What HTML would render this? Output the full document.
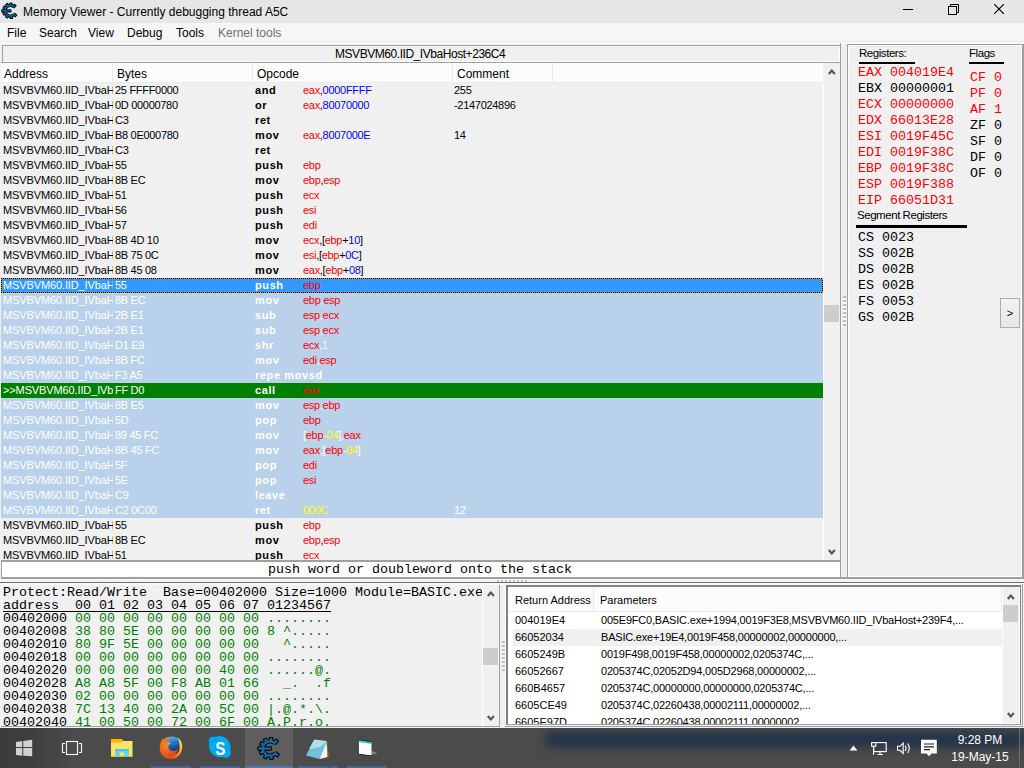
<!DOCTYPE html>
<html><head><meta charset="utf-8">
<style>
*{margin:0;padding:0;box-sizing:border-box}
html,body{width:1024px;height:768px;overflow:hidden}
body{position:relative;background:#f0f0f0;font-family:"Liberation Sans",sans-serif;color:#000}
.a{position:absolute}
i{font-style:normal}
b{font-weight:bold}
#title{left:0;top:0;width:1024px;height:23px;background:#e6e6e6}
#title .t{left:23px;top:4px;font-size:12px;line-height:16px;white-space:nowrap}
#menu{left:0;top:23px;width:1024px;height:18px;background:#f5f6f7}
#menu span{position:absolute;top:2px;font-size:12px;line-height:16px}
#strip{left:0;top:41px;width:1024px;height:1px;background:#ebebeb}
#strip2{left:0;top:42px;width:1024px;height:2px;background:#f8f8f8}
/* disassembler */
#dhead{left:2px;top:45px;width:838px;height:17px;border-top:1px solid #a0a0a0;border-left:1px solid #a0a0a0;background:#f0f0f0;box-shadow:inset 0 -1px 0 #fff,inset -1px 0 0 #fff}
#dhead .t{left:332px;top:0;font-size:12px;letter-spacing:-0.45px;line-height:16px;white-space:nowrap}
#dline{left:1px;top:62px;width:839px;height:1px;background:#a0a0a0}
#dvline{left:840px;top:43px;width:1px;height:535px;background:#a0a0a0}
#lhdr{left:1px;top:63px;width:822px;height:20px;background:#fcfcfc;border-bottom:1px solid #e3ecf7}
#lhdr span{position:absolute;top:3px;font-size:12px;line-height:16px}
#lhdr .sp{top:0;width:1px;height:19px;background:#e3ecf7}
#list{left:1px;top:83px;width:822px;height:477px;overflow:hidden;background:#f0f0f0}
.row{position:absolute;left:0;width:822px;height:15px;font-size:11px;line-height:15px;white-space:nowrap;letter-spacing:-0.3px}
.row b{letter-spacing:0.6px}
.row i{position:absolute;top:0;overflow:hidden}
.ca{left:2px;width:110px;letter-spacing:-0.12px}
.cb{left:114px;width:137px}
.co{left:254px;width:198px}
.cp{left:302px;width:150px}
.cc{left:453px;width:100px}
.r{color:#ff0000}.b{color:#0000ff}.k{color:#000}.w{color:#f4f4f4}
.hl{background:#b9d1ea;color:#fff}
.hl .k{color:#fff}.hl .b{color:#ffff00}
.sel{background:#3399ff;color:#fff}
.sel::before{content:"";position:absolute;left:0;top:0;right:0;bottom:0;background:repeating-linear-gradient(90deg,#000 0 1px,#e08020 1px 2px) top/100% 1px no-repeat,repeating-linear-gradient(90deg,#000 0 1px,#e08020 1px 2px) bottom/100% 1px no-repeat,repeating-linear-gradient(180deg,#000 0 1px,#e08020 1px 2px) left/1px 100% no-repeat,repeating-linear-gradient(180deg,#000 0 1px,#e08020 1px 2px) right/1px 100% no-repeat}
.sel .k{color:#fff}.sel .b{color:#ffff00}
.cur{background:#008000;color:#fff}
.cur .k{color:#fff}.cur .b{color:#ffff00}
#vscroll{left:824px;top:63px;width:16px;height:497px;background:#f0f0f0}
#vthumb{left:824px;top:305px;width:15px;height:17px;background:#cdcdcd}
#dbot{left:1px;top:560px;width:839px;height:1px;background:#a0a0a0}
#status{left:1px;top:561px;width:839px;height:18px;background:#fff;border-left:1px solid #a0a0a0;border-top:1px solid #a0a0a0;border-bottom:2px solid #a0a0a0}
#status .t{left:266px;top:0px;font-family:"Liberation Mono",monospace;font-size:13.33px;line-height:16px;white-space:pre}
/* right panel */
#rp{left:847px;top:44px;width:177px;height:535px;border-top:1px solid #a0a0a0;border-left:1px solid #a0a0a0;border-right:2px solid #a0a0a0;border-bottom:2px solid #a0a0a0;box-shadow:inset 1px 1px 0 #fff,inset -1px -1px 0 #fff}
.lbl{position:absolute;font-size:11.5px;letter-spacing:-0.45px;line-height:16px;white-space:nowrap}
.ul{position:absolute;height:3px;background:#000}
.m{position:absolute;font-family:"Liberation Mono",monospace;font-size:13.33px;line-height:16px;white-space:pre;color:#000}
.m.red{color:#ff0000}
#btn{left:1000px;top:298px;width:20px;height:30px;border:1px solid #adadad;background:linear-gradient(#f2f2f2,#e6e6e6);font-size:11px;text-align:center;line-height:28px}
/* splitter */
#sp1{left:0;top:582px;width:1024px;height:1px;background:#6b6b6b}
#sp3{left:0;top:583px;width:1024px;height:2px;background:#f8f8f8}
#sp2{left:0;top:579px;width:1024px;height:3px;background:#f3f3f3}
/* hex view */
#hex{left:1px;top:585px;width:499px;height:142px;background:#f0f0f0;border-right:1px solid #a0a0a0;border-bottom:1px solid #a0a0a0;overflow:hidden}
.hr,#hex .h1,#hex .h2{position:absolute;left:2px;font-family:"Liberation Mono",monospace;font-size:13.33px;line-height:13px;white-space:pre}
.g{color:#008000}
#hul{left:3px;top:611px;width:328px;height:1px;background:#000}
#hscroll{left:482px;top:585px;width:17px;height:141px;background:#f0f0f0;border-left:1px solid #fff}
/* stack */
#stack{left:506px;top:585px;width:515px;height:140px;border:2px solid #7d828a;border-right:1px solid #7d828a;border-bottom:1px solid #a0a0a0;background:#fff;overflow:hidden}
#shdr{left:0;top:0;width:494px;height:25px;background:#fcfcfc;border-bottom:1px solid #e3ecf7;border-right:1px solid #e3ecf7}
#shdr span{position:absolute;top:5px;font-size:11px;line-height:16px}
.sr{position:absolute;left:0;width:494px;height:17px;font-size:11px;line-height:17px;white-space:nowrap}
.s2{letter-spacing:-0.2px}
.sr.alt{background:#f0f0f0;left:5px;width:489px}
.sr i{position:absolute;top:0}
.s1{left:7px}.s2{left:93px}
.sr.alt .s1{left:2px}.sr.alt .s2{left:88px}
#sscroll{left:1003px;top:587px;width:16px;height:136px;background:#f0f0f0}
#sthumb{left:1003px;top:605px;width:15px;height:17px;background:#cdcdcd}
/* taskbar */
.grip{background:repeating-linear-gradient(180deg,#bdbdbd 0 2px,#f8f8f8 2px 4px)}
.gripx{background:repeating-linear-gradient(90deg,#c4c4c4 0 2px,#f8f8f8 2px 4px)}
#task{left:0;top:728px;width:1024px;height:40px;background:#4b4b4b;overflow:hidden}
</style></head><body>
<div id="title" class="a">
 <svg width="0" height="0" style="position:absolute"><defs><symbol id="ce" viewBox="0 0 24 24"><g fill="#000"><path d="M17.63 6.98A7.20 7.20 0 1 0 18.43 17.22" fill="none" stroke="#000" stroke-width="4.4"/><rect x="6.2" y="-2.20" width="5.4" height="4.40" transform="translate(13,12.5) rotate(-50)"/><rect x="6.2" y="-2.20" width="5.4" height="4.40" transform="translate(13,12.5) rotate(-84)"/><rect x="6.2" y="-2.20" width="5.4" height="4.40" transform="translate(13,12.5) rotate(-118)"/><rect x="6.2" y="-2.20" width="5.4" height="4.40" transform="translate(13,12.5) rotate(-150)"/><rect x="6.2" y="-2.20" width="5.4" height="4.40" transform="translate(13,12.5) rotate(155)"/><rect x="6.2" y="-2.20" width="5.4" height="4.40" transform="translate(13,12.5) rotate(118)"/><rect x="6.2" y="-2.20" width="5.4" height="4.40" transform="translate(13,12.5) rotate(81)"/><rect x="6.2" y="-2.20" width="5.4" height="4.40" transform="translate(13,12.5) rotate(41)"/><rect x="0.3" y="10.30" width="14.5" height="4.40" rx="1"/></g><g fill="#1068a8"><path d="M17.63 6.98A7.20 7.20 0 1 0 18.43 17.22" fill="none" stroke="#1068a8" stroke-width="2.4"/><rect x="6.2" y="-1.20" width="4.4" height="2.40" transform="translate(13,12.5) rotate(-50)"/><rect x="6.2" y="-1.20" width="4.4" height="2.40" transform="translate(13,12.5) rotate(-84)"/><rect x="6.2" y="-1.20" width="4.4" height="2.40" transform="translate(13,12.5) rotate(-118)"/><rect x="6.2" y="-1.20" width="4.4" height="2.40" transform="translate(13,12.5) rotate(-150)"/><rect x="6.2" y="-1.20" width="4.4" height="2.40" transform="translate(13,12.5) rotate(155)"/><rect x="6.2" y="-1.20" width="4.4" height="2.40" transform="translate(13,12.5) rotate(118)"/><rect x="6.2" y="-1.20" width="4.4" height="2.40" transform="translate(13,12.5) rotate(81)"/><rect x="6.2" y="-1.20" width="4.4" height="2.40" transform="translate(13,12.5) rotate(41)"/><rect x="1.3" y="11.30" width="12.5" height="2.40"/></g></symbol><symbol id="ce2" viewBox="0 0 24 24"><g fill="#000"><path d="M17.76 6.83A7.40 7.40 0 1 0 18.58 17.35" fill="none" stroke="#000" stroke-width="4.6"/><rect x="6.4" y="-2.30" width="5.2" height="4.60" transform="translate(13,12.5) rotate(-50)"/><rect x="6.4" y="-2.30" width="5.2" height="4.60" transform="translate(13,12.5) rotate(-84)"/><rect x="6.4" y="-2.30" width="5.2" height="4.60" transform="translate(13,12.5) rotate(-118)"/><rect x="6.4" y="-2.30" width="5.2" height="4.60" transform="translate(13,12.5) rotate(-150)"/><rect x="6.4" y="-2.30" width="5.2" height="4.60" transform="translate(13,12.5) rotate(155)"/><rect x="6.4" y="-2.30" width="5.2" height="4.60" transform="translate(13,12.5) rotate(118)"/><rect x="6.4" y="-2.30" width="5.2" height="4.60" transform="translate(13,12.5) rotate(81)"/><rect x="6.4" y="-2.30" width="5.2" height="4.60" transform="translate(13,12.5) rotate(41)"/><rect x="0.3" y="10.20" width="14.5" height="4.60" rx="1"/></g><g fill="#0a6aa8"><path d="M17.76 6.83A7.40 7.40 0 1 0 18.58 17.35" fill="none" stroke="#0a6aa8" stroke-width="1.8"/><rect x="6.4" y="-0.90" width="4.2" height="1.80" transform="translate(13,12.5) rotate(-50)"/><rect x="6.4" y="-0.90" width="4.2" height="1.80" transform="translate(13,12.5) rotate(-84)"/><rect x="6.4" y="-0.90" width="4.2" height="1.80" transform="translate(13,12.5) rotate(-118)"/><rect x="6.4" y="-0.90" width="4.2" height="1.80" transform="translate(13,12.5) rotate(-150)"/><rect x="6.4" y="-0.90" width="4.2" height="1.80" transform="translate(13,12.5) rotate(155)"/><rect x="6.4" y="-0.90" width="4.2" height="1.80" transform="translate(13,12.5) rotate(118)"/><rect x="6.4" y="-0.90" width="4.2" height="1.80" transform="translate(13,12.5) rotate(81)"/><rect x="6.4" y="-0.90" width="4.2" height="1.80" transform="translate(13,12.5) rotate(41)"/><rect x="1.3" y="11.60" width="12.5" height="1.80"/></g></symbol></defs></svg><svg class="a" style="left:1px;top:2px" width="17" height="17"><use href="#ce2"/></svg>
 <div class="a t">Memory Viewer - Currently debugging thread A5C</div>
 <svg class="a" style="left:903px;top:9px" width="10" height="1"><rect width="10" height="1" fill="#000"/></svg>
 <svg class="a" style="left:948px;top:4px" width="11" height="11" viewBox="0 0 11 11"><rect x="0.5" y="2.5" width="8" height="8" fill="none" stroke="#000"/><path d="M2.5 2.5V0.5H10.5V8.5H8.5" fill="none" stroke="#000"/></svg>
 <svg class="a" style="left:994px;top:4px" width="10" height="10" viewBox="0 0 10 10"><path d="M0 0L10 10M10 0L0 10" stroke="#000" stroke-width="1.2"/></svg>
</div>
<div id="menu" class="a">
 <span style="left:7px">File</span><span style="left:39px">Search</span><span style="left:88px">View</span><span style="left:127px">Debug</span><span style="left:176px">Tools</span><span style="left:218px;color:#6d6d6d">Kernel tools</span>
</div>
<div id="strip" class="a"></div><div id="strip2" class="a"></div>
<div id="dhead" class="a"><div class="a t">MSVBVM60.IID_IVbaHost+236C4</div></div>
<div id="dline" class="a"></div>
<div id="dvline" class="a"></div>
<div id="lhdr" class="a">
 <span style="left:3px">Address</span><span class="sp" style="left:111px"></span>
 <span style="left:116px">Bytes</span><span class="sp" style="left:251px"></span>
 <span style="left:256px">Opcode</span><span class="sp" style="left:451px"></span>
 <span style="left:456px">Comment</span><span class="sp" style="left:551px"></span>
</div>
<div id="list" class="a">
<div class="row" style="top:0px"><i class="ca">MSVBVM60.IID_IVbaH</i><i class="cb">25 FFFF0000</i><i class="co"><b>and</b></i><i class="cp"><span class="r">eax</span><span class="k">,</span><span class="b">0000FFFF</span></i><i class="cc">255</i></div>
<div class="row" style="top:15px"><i class="ca">MSVBVM60.IID_IVbaH</i><i class="cb">0D 00000780</i><i class="co"><b>or</b></i><i class="cp"><span class="r">eax</span><span class="k">,</span><span class="b">80070000</span></i><i class="cc">-2147024896</i></div>
<div class="row" style="top:30px"><i class="ca">MSVBVM60.IID_IVbaH</i><i class="cb">C3</i><i class="co"><b>ret</b></i><i class="cp"></i><i class="cc"></i></div>
<div class="row" style="top:45px"><i class="ca">MSVBVM60.IID_IVbaH</i><i class="cb">B8 0E000780</i><i class="co"><b>mov</b></i><i class="cp"><span class="r">eax</span><span class="k">,</span><span class="b">8007000E</span></i><i class="cc">14</i></div>
<div class="row" style="top:60px"><i class="ca">MSVBVM60.IID_IVbaH</i><i class="cb">C3</i><i class="co"><b>ret</b></i><i class="cp"></i><i class="cc"></i></div>
<div class="row" style="top:75px"><i class="ca">MSVBVM60.IID_IVbaH</i><i class="cb">55</i><i class="co"><b>push</b></i><i class="cp"><span class="r">ebp</span></i><i class="cc"></i></div>
<div class="row" style="top:90px"><i class="ca">MSVBVM60.IID_IVbaH</i><i class="cb">8B EC</i><i class="co"><b>mov</b></i><i class="cp"><span class="r">ebp</span><span class="k">,</span><span class="r">esp</span></i><i class="cc"></i></div>
<div class="row" style="top:105px"><i class="ca">MSVBVM60.IID_IVbaH</i><i class="cb">51</i><i class="co"><b>push</b></i><i class="cp"><span class="r">ecx</span></i><i class="cc"></i></div>
<div class="row" style="top:120px"><i class="ca">MSVBVM60.IID_IVbaH</i><i class="cb">56</i><i class="co"><b>push</b></i><i class="cp"><span class="r">esi</span></i><i class="cc"></i></div>
<div class="row" style="top:135px"><i class="ca">MSVBVM60.IID_IVbaH</i><i class="cb">57</i><i class="co"><b>push</b></i><i class="cp"><span class="r">edi</span></i><i class="cc"></i></div>
<div class="row" style="top:150px"><i class="ca">MSVBVM60.IID_IVbaH</i><i class="cb">8B 4D 10</i><i class="co"><b>mov</b></i><i class="cp"><span class="r">ecx</span><span class="k">,[</span><span class="r">ebp</span><span class="k">+</span><span class="b">10</span><span class="k">]</span></i><i class="cc"></i></div>
<div class="row" style="top:165px"><i class="ca">MSVBVM60.IID_IVbaH</i><i class="cb">8B 75 0C</i><i class="co"><b>mov</b></i><i class="cp"><span class="r">esi</span><span class="k">,[</span><span class="r">ebp</span><span class="k">+</span><span class="b">0C</span><span class="k">]</span></i><i class="cc"></i></div>
<div class="row" style="top:180px"><i class="ca">MSVBVM60.IID_IVbaH</i><i class="cb">8B 45 08</i><i class="co"><b>mov</b></i><i class="cp"><span class="r">eax</span><span class="k">,[</span><span class="r">ebp</span><span class="k">+</span><span class="b">08</span><span class="k">]</span></i><i class="cc"></i></div>
<div class="row sel" style="top:195px"><i class="ca">MSVBVM60.IID_IVbaH</i><i class="cb">55</i><i class="co"><b>push</b></i><i class="cp"><span class="r">ebp</span></i><i class="cc"></i></div>
<div class="row hl" style="top:210px"><i class="ca">MSVBVM60.IID_IVbaH</i><i class="cb">8B EC</i><i class="co"><b>mov</b></i><i class="cp"><span class="r">ebp</span><span class="k">,</span><span class="r">esp</span></i><i class="cc"></i></div>
<div class="row hl" style="top:225px"><i class="ca">MSVBVM60.IID_IVbaH</i><i class="cb">2B E1</i><i class="co"><b>sub</b></i><i class="cp"><span class="r">esp</span><span class="k">,</span><span class="r">ecx</span></i><i class="cc"></i></div>
<div class="row hl" style="top:240px"><i class="ca">MSVBVM60.IID_IVbaH</i><i class="cb">2B E1</i><i class="co"><b>sub</b></i><i class="cp"><span class="r">esp</span><span class="k">,</span><span class="r">ecx</span></i><i class="cc"></i></div>
<div class="row hl" style="top:255px"><i class="ca">MSVBVM60.IID_IVbaH</i><i class="cb">D1 E9</i><i class="co"><b>shr</b></i><i class="cp"><span class="r">ecx</span><span class="k">,</span><span class="w">1</span></i><i class="cc"></i></div>
<div class="row hl" style="top:270px"><i class="ca">MSVBVM60.IID_IVbaH</i><i class="cb">8B FC</i><i class="co"><b>mov</b></i><i class="cp"><span class="r">edi</span><span class="k">,</span><span class="r">esp</span></i><i class="cc"></i></div>
<div class="row hl" style="top:285px"><i class="ca">MSVBVM60.IID_IVbaH</i><i class="cb">F3 A5</i><i class="co"><b>repe movsd</b></i><i class="cp"></i><i class="cc"></i></div>
<div class="row cur" style="top:300px"><i class="ca">&gt;&gt;MSVBVM60.IID_IVbaH</i><i class="cb">FF D0</i><i class="co"><b>call</b></i><i class="cp"><span class="r">eax</span></i><i class="cc"></i></div>
<div class="row hl" style="top:315px"><i class="ca">MSVBVM60.IID_IVbaH</i><i class="cb">8B E5</i><i class="co"><b>mov</b></i><i class="cp"><span class="r">esp</span><span class="k">,</span><span class="r">ebp</span></i><i class="cc"></i></div>
<div class="row hl" style="top:330px"><i class="ca">MSVBVM60.IID_IVbaH</i><i class="cb">5D</i><i class="co"><b>pop</b></i><i class="cp"><span class="r">ebp</span></i><i class="cc"></i></div>
<div class="row hl" style="top:345px"><i class="ca">MSVBVM60.IID_IVbaH</i><i class="cb">89 45 FC</i><i class="co"><b>mov</b></i><i class="cp"><span class="k">[</span><span class="r">ebp</span><span class="k">-</span><span class="b">04</span><span class="k">]</span><span class="k">,</span><span class="r">eax</span></i><i class="cc"></i></div>
<div class="row hl" style="top:360px"><i class="ca">MSVBVM60.IID_IVbaH</i><i class="cb">8B 45 FC</i><i class="co"><b>mov</b></i><i class="cp"><span class="r">eax</span><span class="k">,[</span><span class="r">ebp</span><span class="k">-</span><span class="b">04</span><span class="k">]</span></i><i class="cc"></i></div>
<div class="row hl" style="top:375px"><i class="ca">MSVBVM60.IID_IVbaH</i><i class="cb">5F</i><i class="co"><b>pop</b></i><i class="cp"><span class="r">edi</span></i><i class="cc"></i></div>
<div class="row hl" style="top:390px"><i class="ca">MSVBVM60.IID_IVbaH</i><i class="cb">5E</i><i class="co"><b>pop</b></i><i class="cp"><span class="r">esi</span></i><i class="cc"></i></div>
<div class="row hl" style="top:405px"><i class="ca">MSVBVM60.IID_IVbaH</i><i class="cb">C9</i><i class="co"><b>leave</b></i><i class="cp"></i><i class="cc"></i></div>
<div class="row hl" style="top:420px"><i class="ca">MSVBVM60.IID_IVbaH</i><i class="cb">C2 0C00</i><i class="co"><b>ret</b></i><i class="cp"><span class="b">000C</span></i><i class="cc">12</i></div>
<div class="row" style="top:435px"><i class="ca">MSVBVM60.IID_IVbaH</i><i class="cb">55</i><i class="co"><b>push</b></i><i class="cp"><span class="r">ebp</span></i><i class="cc"></i></div>
<div class="row" style="top:450px"><i class="ca">MSVBVM60.IID_IVbaH</i><i class="cb">8B EC</i><i class="co"><b>mov</b></i><i class="cp"><span class="r">ebp</span><span class="k">,</span><span class="r">esp</span></i><i class="cc"></i></div>
<div class="row" style="top:465px"><i class="ca">MSVBVM60.IID_IVbaH</i><i class="cb">51</i><i class="co"><b>push</b></i><i class="cp"><span class="r">ecx</span></i><i class="cc"></i></div>
</div>
<div id="vscroll" class="a">
 <svg class="a" style="left:4px;top:6px" width="8" height="6" viewBox="0 0 8 6"><path d="M0.8 5L3.8 1.6L6.8 5" fill="none" stroke="#555" stroke-width="2.2"/></svg>
 <svg class="a" style="left:4px;top:486px" width="8" height="6" viewBox="0 0 8 6"><path d="M0.8 1L3.8 4.4L6.8 1" fill="none" stroke="#555" stroke-width="2.2"/></svg>
</div>
<div id="vthumb" class="a"></div>
<div class="a" style="left:823px;top:83px;width:1px;height:477px;background:#fff"></div>
<div class="a grip" style="left:843px;top:296px;width:3px;height:30px"></div>
<div id="dbot" class="a"></div>
<div id="status" class="a"><div class="a t">push word or doubleword onto the stack</div></div>
<div id="rp" class="a"></div>
<div class="lbl" style="left:859px;top:45px">Registers:</div>
<div class="ul" style="left:859px;top:62px;width:56px;height:2px"></div>
<div class="lbl" style="left:969px;top:45px">Flags</div>
<div class="ul" style="left:969px;top:62px;width:35px;height:2px"></div>
<div class="m red" style="left:858px;top:65px">EAX 004019E4</div>
<div class="m" style="left:858px;top:81px">EBX 00000001</div>
<div class="m red" style="left:858px;top:97px">ECX 00000000</div>
<div class="m red" style="left:858px;top:113px">EDX 66013E28</div>
<div class="m red" style="left:858px;top:129px">ESI 0019F45C</div>
<div class="m red" style="left:858px;top:145px">EDI 0019F38C</div>
<div class="m red" style="left:858px;top:161px">EBP 0019F38C</div>
<div class="m red" style="left:858px;top:177px">ESP 0019F388</div>
<div class="m red" style="left:858px;top:193px">EIP 66051D31</div>
<div class="m red" style="left:970px;top:70px">CF 0</div>
<div class="m red" style="left:970px;top:86px">PF 0</div>
<div class="m red" style="left:970px;top:102px">AF 1</div>
<div class="m" style="left:970px;top:118px">ZF 0</div>
<div class="m" style="left:970px;top:134px">SF 0</div>
<div class="m" style="left:970px;top:150px">DF 0</div>
<div class="m" style="left:970px;top:166px">OF 0</div>
<div class="lbl" style="left:857px;top:207px">Segment Registers</div>
<div class="ul" style="left:856px;top:225px;width:111px"></div>
<div class="m" style="left:858px;top:230px">CS 0023</div>
<div class="m" style="left:858px;top:246px">SS 002B</div>
<div class="m" style="left:858px;top:262px">DS 002B</div>
<div class="m" style="left:858px;top:278px">ES 002B</div>
<div class="m" style="left:858px;top:294px">FS 0053</div>
<div class="m" style="left:858px;top:310px">GS 002B</div>
<div id="btn" class="a">&gt;</div>
<div class="a" style="left:840px;top:577px;width:8px;height:2px;background:#a0a0a0"></div>
<div id="sp2" class="a"></div>
<div id="sp1" class="a"></div><div id="sp3" class="a"></div>
<div id="hex" class="a">
 <div class="h1" style="top:1px;left:2px">Protect:Read/Write  Base=00402000 Size=1000 Module=BASIC.exe</div>
 <div class="h2" style="top:14px;left:2px">address  00 01 02 03 04 05 06 07 01234567</div>
</div>
<div id="hul" class="a"></div>
<div class="a" style="left:1px;top:585px;width:1px;height:141px;background:#fff"></div>
<div class="a" style="left:1px;top:584px;width:482px;height:142px;overflow:hidden">
<div class="a" style="left:0;top:-584px;width:482px;height:800px">
<div class="hr" style="top:612px">00402000 <span class="g">00 00 00 00 00 00 00 00 ........</span></div>
<div class="hr" style="top:625px">00402008 <span class="g">38 80 5E 00 00 00 00 00 8 ^.....</span></div>
<div class="hr" style="top:638px">00402010 <span class="g">80 9F 5E 00 00 00 00 00   ^.....</span></div>
<div class="hr" style="top:651px">00402018 <span class="g">00 00 00 00 00 00 00 00 ........</span></div>
<div class="hr" style="top:664px">00402020 <span class="g">00 00 00 00 00 00 40 00 ......@.</span></div>
<div class="hr" style="top:677px">00402028 <span class="g">A8 A8 5F 00 F8 AB 01 66   _.  .f</span></div>
<div class="hr" style="top:690px">00402030 <span class="g">02 00 00 00 00 00 00 00 ........</span></div>
<div class="hr" style="top:703px">00402038 <span class="g">7C 13 40 00 2A 00 5C 00 |.@.*.\.</span></div>
<div class="hr" style="top:716px">00402040 <span class="g">41 00 50 00 72 00 6F 00 A.P.r.o.</span></div>
</div></div>
<div id="hscroll" class="a">
 <svg class="a" style="left:4px;top:6px" width="8" height="6" viewBox="0 0 8 6"><path d="M0.8 5L3.8 1.6L6.8 5" fill="none" stroke="#555" stroke-width="2.2"/></svg>
 <svg class="a" style="left:4px;top:130px" width="8" height="6" viewBox="0 0 8 6"><path d="M0.8 1L3.8 4.4L6.8 1" fill="none" stroke="#555" stroke-width="2.2"/></svg>
</div>
<div id="stack" class="a">
 <div id="shdr" class="a"><span style="left:7px">Return Address</span><span style="left:92px">Parameters</span><span class="a" style="left:85px;top:0;width:1px;height:25px;background:#e3ecf7"></span></div>
<div class="sr" style="top:25px"><i class="s1">004019E4</i><i class="s2">005E9FC0,BASIC.exe+1994,0019F3E8,MSVBVM60.IID_IVbaHost+239F4,...</i></div>
<div class="sr alt" style="top:42px"><i class="s1">66052034</i><i class="s2">BASIC.exe+19E4,0019F458,00000002,00000000,...</i></div>
<div class="sr" style="top:59px"><i class="s1">6605249B</i><i class="s2">0019F498,0019F458,00000002,0205374C,...</i></div>
<div class="sr" style="top:76px"><i class="s1">66052667</i><i class="s2">0205374C,02052D94,005D2968,00000002,...</i></div>
<div class="sr" style="top:93px"><i class="s1">660B4657</i><i class="s2">0205374C,00000000,00000000,0205374C,...</i></div>
<div class="sr" style="top:110px"><i class="s1">6605CE49</i><i class="s2">0205374C,02260438,00002111,00000002,...</i></div>
<div class="sr" style="top:127px"><i class="s1">6605E97D</i><i class="s2">0205374C,02260438,00002111,00000002,...</i></div>
</div>
<div id="sscroll" class="a">
 <svg class="a" style="left:4px;top:7px" width="8" height="6" viewBox="0 0 8 6"><path d="M0.8 5L3.8 1.6L6.8 5" fill="none" stroke="#555" stroke-width="2.2"/></svg>
 <svg class="a" style="left:4px;top:125px" width="8" height="6" viewBox="0 0 8 6"><path d="M0.8 1L3.8 4.4L6.8 1" fill="none" stroke="#555" stroke-width="2.2"/></svg>
</div>
<div id="sthumb" class="a"></div>
<div class="a" style="left:1022px;top:584px;width:1px;height:143px;background:#a0a0a0"></div>
<div class="a" style="left:505px;top:726px;width:518px;height:1px;background:#a0a0a0"></div>
<div class="a" style="left:505px;top:585px;width:1px;height:141px;background:#fff"></div>
<div class="a" style="left:483px;top:648px;width:15px;height:17px;background:#cdcdcd"></div>
<div class="a grip" style="left:502px;top:641px;width:3px;height:30px"></div>
<div class="a gripx" style="left:497px;top:580px;width:31px;height:2px"></div>
<div id="task" class="a">
 <div class="a" style="left:0;top:0;width:70px;height:40px;background:linear-gradient(90deg,#3b3b3b,#3e3e3e 30px,#4a4a4a 70px)"></div>
 <div class="a" style="left:546px;top:4px;width:480px;height:15px;background:#22334a;filter:blur(5px)"></div>
 <div class="a" style="left:245px;top:0;width:48px;height:40px;background:#5e5e5e"></div>
 <div class="a" style="left:151px;top:38px;width:40px;height:2px;background:#44679c"></div>
 <div class="a" style="left:200px;top:38px;width:40px;height:2px;background:#44679c"></div>
 <div class="a" style="left:245px;top:38px;width:48px;height:2px;background:#4f77b0"></div>
 <div class="a" style="left:298px;top:38px;width:40px;height:2px;background:#44679c"></div>
 <div class="a" style="left:329px;top:38px;width:1px;height:2px;background:#2c3f5c"></div>
 <div class="a" style="left:347px;top:38px;width:40px;height:2px;background:#44679c"></div>
 <div class="a" style="left:1019px;top:0;width:1px;height:40px;background:#6a6a6a"></div>
 <svg class="a" style="left:0;top:0" width="1024" height="40" viewBox="0 0 1024 40">
  <g fill="#d2d2d2">
   <path d="M16 13.9L22.3 13V19H16Z"/><path d="M23.3 12.9L32.2 11.7V19H23.3Z"/>
   <path d="M16 20H22.3V27.7L16 27Z"/><path d="M23.3 20H32.2V28.3L23.3 27.8Z"/>
  </g>
  <g fill="none" stroke="#f2f2f2" stroke-width="1.15">
   <rect x="66.5" y="13.5" width="11" height="13"/>
   <path d="M65 15.5H62.5V24.5H65M79 15.5H81.5V24.5H79"/>
  </g>
  <!-- folder -->
  <path d="M111 11H121.5L123.5 13H132.5V29H111Z" fill="#fde467"/>
  <path d="M111 11H121.5L123.2 13.2L121.5 14.5H111Z" fill="#ffb300"/>
  <rect x="111" y="27.8" width="21.5" height="1.2" fill="#f5b800"/>
  <path d="M115.2 21.2H128.8V29H124.2V24.5H119.7V29H115.2Z" fill="#5ad7f7"/>
  <path d="M115.2 21.2H128.8V22.5H115.2Z" fill="#29bff0"/>
  <!-- firefox -->
  <defs>
   <radialGradient id="ffo" cx="0.35" cy="0.35" r="0.8"><stop offset="0" stop-color="#f5901e"/><stop offset="0.6" stop-color="#e8601c"/><stop offset="1" stop-color="#d7341c"/></radialGradient>
   <linearGradient id="ffb" x1="0" y1="0" x2="0.3" y2="1"><stop offset="0" stop-color="#62c4f2"/><stop offset="0.5" stop-color="#1f73c4"/><stop offset="1" stop-color="#102a78"/></linearGradient>
   <linearGradient id="ffy" x1="0" y1="0" x2="0" y2="1"><stop offset="0" stop-color="#ffe27a"/><stop offset="0.5" stop-color="#ffc40e"/><stop offset="1" stop-color="#f07a1a"/></linearGradient>
  </defs>
  <circle cx="171" cy="19.8" r="11.3" fill="url(#ffo)"/>
  <circle cx="173.2" cy="17.2" r="8.7" fill="url(#ffb)"/>
  <path d="M160.2 17C160.5 13.5 161.5 11.5 162.5 10.5C163.3 12 164.5 13 166.5 13.4C168.5 13.2 170.2 14.2 170.4 15.6C169.3 16.2 168.2 17.4 168.3 19.2C168.5 21.6 171 23.2 173.5 23C175.6 22.8 177.3 21.6 178.3 20.2C177.5 24.6 173.8 28 169 28C164 28 160 23 160.2 17Z" fill="url(#ffo)"/>
  <path d="M177.8 9.6C181.5 12.5 182.8 17 182 21C181 26 177 30 171.5 31C176.5 28.5 179.8 24 179.6 18.5C179.5 15 178.8 12 177.8 9.6Z" fill="url(#ffy)"/>
  <path d="M168.5 15.5L170.3 15.2L169.5 16.5Z" fill="#fff" opacity="0.8"/>
  <!-- skype -->
  <path d="M213 8.7C210.5 8.7 208.7 10.5 208.7 13C208.7 13.8 209 14.6 209.3 15.3C209.1 16.2 209 17 209 17.8C209 24.2 214.2 29.3 220.5 29.3C221.3 29.3 222.2 29.2 223 29C223.7 29.4 224.6 29.8 225.6 29.8C228.6 29.8 231 27.6 231 24.6C231 23.6 230.8 22.7 230.3 21.9C230.5 21.1 230.6 20.3 230.6 19.5C230.6 13.2 225.5 8.1 219.2 8.1C218.4 8.1 217.6 8.2 216.8 8.4C215.9 8.8 214.2 8.7 213 8.7Z" fill="#00aaf0"/>
  <text transform="translate(220.3,26.8) scale(0.8,1)" font-family="Liberation Sans" font-weight="bold" font-size="19" fill="#fff" text-anchor="middle">S</text>
  <!-- CE -->
  <use href="#ce" x="257" y="8" width="24" height="24"/>
  <!-- notepad -->
  <path d="M314 12L326.5 13.5L319.5 31L306 27.5Z" fill="#6fc0d8"/>
  <path d="M314 12L326.5 13.5L320 19L309 21Z" fill="#bfe6f0" opacity="0.8"/>
  <path d="M326.5 13.5L327.5 29L320 31L319.5 31Z" fill="#eef4f6"/>
  <path d="M327.5 14L328.5 29L327.5 29Z" fill="#c8901a"/>
  <path d="M314 11.5L326.5 13L326.5 14.5L314 13Z" fill="#cfd8da"/>
  <!-- window app -->
  <path d="M359 12.5L371.5 14.5V27.5L359 26Z" fill="#fff"/>
  <path d="M359 12L371.5 14V16L359 14Z" fill="#1ecad0"/>
  <path d="M359 11.5L371.5 13.5V14L359 12Z" fill="#000"/>
  <path d="M359 26L371.5 27.5V28.3L359 26.8Z" fill="#111"/>
  <path d="M372 23L377.5 25L372 26.5Z" fill="#8a8a8a"/>
  <!-- tray -->
  <path d="M849.7 22.6L853.5 17.5L857.3 22.6Z" fill="#fff"/>
  <g fill="none" stroke="#fff" stroke-width="1.1">
   <rect x="873.6" y="14.6" width="12.6" height="9"/>
   <rect x="871.6" y="14.6" width="4.2" height="3.6" fill="#3a4450"/>
   <path d="M873.6 18.2V26.8M880 23.6V26.5M877.5 26.5H883"/>
   <path d="M897.5 18.3H900L903.2 15V25.5L900 22.3H897.5Z"/>
   <path d="M905 17.5C906.2 19 906.2 21.5 905 23M907.5 15.5C909.8 18 909.8 22.5 907.5 25"/>
  </g>
  <path d="M921 11.7H936.8V25.5H931.5L929 28.2L926.5 25.5H921Z" fill="#fff"/>
  <path d="M924 16H934M924 18.8H934M924 21.6H930" stroke="#1e1e1e" stroke-width="1.2"/>
 </svg>
 <div class="a" style="left:950px;top:4px;width:60px;text-align:center;color:#fff;font-size:12px;line-height:16px">9:28 PM</div>
 <div class="a" style="left:950px;top:21px;width:60px;text-align:center;color:#fff;font-size:12px;line-height:16px">19-May-15</div>
</div>

</body></html>
